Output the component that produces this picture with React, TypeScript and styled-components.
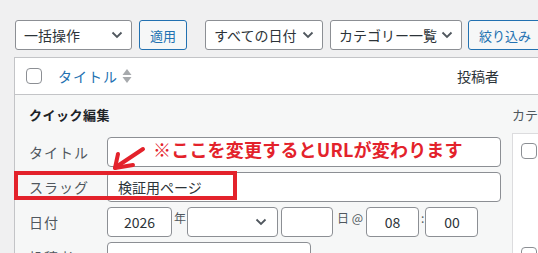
import styled, { createGlobalStyle } from "styled-components";

const GlobalStyle = createGlobalStyle`
  html, body {
    margin: 0;
    padding: 0;
    background: #f0f0f1;
    overflow: hidden;
  }
  body {
    font-family: "Noto Sans CJK JP", "Noto Sans", sans-serif;
    font-size: 14px;
    color: #2c3338;
  }
`;

const Page = styled.div`
  position: relative;
  width: 538px;
  height: 253px;
  overflow: hidden;
`;

const Toolbar = styled.div`
  display: flex;
  align-items: center;
  padding: 20px 0 0 15px;
  white-space: nowrap;
`;

const Select = styled.div<{ $w: number; $gap?: number }>`
  box-sizing: border-box;
  flex: none;
  width: ${(p) => p.$w}px;
  height: 30px;
  margin-right: ${(p) => p.$gap ?? 7}px;
  padding: 0 8px;
  display: flex;
  align-items: center;
  justify-content: space-between;
  background: #fff;
  border: 1px solid #8c8f94;
  border-radius: 3px;
  color: #2c3338;
  font-size: 14px;
`;

const Button = styled.div<{ $gap?: number }>`
  box-sizing: border-box;
  flex: none;
  height: 30px;
  padding: 0 10px;
  margin-right: ${(p) => p.$gap ?? 7}px;
  display: flex;
  align-items: center;
  background: #f6f7f7;
  border: 1px solid #2271b1;
  border-radius: 3px;
  color: #2271b1;
  font-size: 13px;
`;

const Chevron = () => (
  <svg width="12" height="8" viewBox="0 0 12 8">
    <path d="M1.5 1.5 L6 6 L10.5 1.5" fill="none" stroke="#50575e" strokeWidth="1.8" />
  </svg>
);

const Table = styled.div`
  margin: 7px 0 0 14px;
  width: 600px;
  border: 1px solid #c3c4c7;
  background: #fff;
`;

const HeadRow = styled.div`
  display: grid;
  grid-template-columns: 43px 399px 1fr;
  align-items: center;
  height: 36px;
  border-bottom: 1px solid #c3c4c7;
`;

const Check = styled.span`
  box-sizing: border-box;
  display: block;
  width: 16px;
  height: 16px;
  border: 1px solid #8c8f94;
  border-radius: 4px;
  background: #fff;
`;

const CheckCell = styled.div`
  padding-left: 11px;
`;

const SortLink = styled.div`
  display: flex;
  align-items: center;
  gap: 4px;
  color: #2271b1;
  font-size: 14px;
  letter-spacing: 1px;
`;

const AuthorHead = styled.div`
  color: #2c3338;
  font-size: 14px;
`;

const Edit = styled.div`
  display: flex;
  background: #f6f7f7;
  height: 200px;
`;

const LeftCol = styled.div`
  flex: none;
  width: 472px;
  padding: 10px 0 0 14px;
`;

const EditTitle = styled.div`
  font-weight: bold;
  font-size: 13px;
  line-height: 20px;
  color: #1d2327;
  letter-spacing: 0.5px;
  margin-bottom: 12px;
`;

const Row = styled.div`
  display: flex;
  align-items: center;
  height: 30px;
  margin-bottom: 5px;
`;

const Label = styled.div`
  flex: none;
  width: 78px;
  color: #50575e;
  font-size: 14px;
  letter-spacing: 1px;
`;

const Input = styled.div<{ $w: number; $center?: boolean; $ml?: number }>`
  box-sizing: border-box;
  flex: none;
  width: ${(p) => p.$w}px;
  height: 30px;
  margin-left: ${(p) => p.$ml ?? 0}px;
  padding: 0 10px;
  display: flex;
  align-items: center;
  justify-content: ${(p) => (p.$center ? "center" : "space-between")};
  background: #fff;
  border: 1px solid #8c8f94;
  border-radius: 4px;
  color: #2c3338;
  font-size: 14px;
`;

const Unit = styled.span<{ $l: number; $r: number }>`
  flex: none;
  margin: 0 ${(p) => p.$r}px 0 ${(p) => p.$l}px;
  color: #50575e;
  font-size: 12px;
  align-self: flex-start;
  line-height: 22px;
`;

const RightCol = styled.div`
  flex: 1;
  padding: 10px 0 0 11px;
`;

const CatLabel = styled.div`
  font-size: 13px;
  line-height: 20px;
  color: #50575e;
  white-space: nowrap;
  margin-bottom: 8px;
`;

const CatBox = styled.div`
  height: 130px;
  border: 1px solid #dcdcde;
  border-right: none;
  background: #fff;
  padding: 9px 0 0 8px;
  display: flex;
  flex-direction: column;
  gap: 88px;
`;

const Note = styled.div`
  position: absolute;
  left: 153px;
  top: 137px;
  color: #e3222b;
  font-weight: bold;
  font-size: 18px;
  line-height: 24px;
  white-space: nowrap;
  letter-spacing: 0.2px;
`;

const Highlight = styled.div`
  position: absolute;
  left: 14px;
  top: 171px;
  width: 223px;
  height: 29px;
  box-sizing: border-box;
  border: 4px solid #e3222b;
`;

const Arrow = styled.svg`
  position: absolute;
  left: 0;
  top: 0;
`;

export default function App() {
  return (
    <Page>
      <GlobalStyle />
      <Toolbar>
        <Select $w={117}>
          一括操作 <Chevron />
        </Select>
        <Button $gap={18}>適用</Button>
        <Select $w={118}>
          すべての日付 <Chevron />
        </Select>
        <Select $w={132} $gap={6}>
          カテゴリー一覧 <Chevron />
        </Select>
        <Button>絞り込み</Button>
      </Toolbar>
      <Table>
        <HeadRow>
          <CheckCell>
            <Check />
          </CheckCell>
          <SortLink>
            タイトル
            <svg width="10" height="16" viewBox="0 0 10 16">
              <path d="M5 1 L9.5 7 L0.5 7 Z" fill="#a7aaad" />
              <path d="M5 15 L9.5 9 L0.5 9 Z" fill="#a7aaad" />
            </svg>
          </SortLink>
          <AuthorHead>投稿者</AuthorHead>
        </HeadRow>
        <Edit>
          <LeftCol>
            <EditTitle>クイック編集</EditTitle>
            <Row>
              <Label>タイトル</Label>
              <Input $w={394} />
            </Row>
            <Row>
              <Label>スラッグ</Label>
              <Input $w={394}>検証用ページ</Input>
            </Row>
            <Row>
              <Label>日付</Label>
              <Input $w={65} $center>
                2026
              </Input>
              <Unit $l={2} $r={1}>年</Unit>
              <Input $w={91}>
                <span />
                <Chevron />
              </Input>
              <Input $w={52} $ml={3} />
              <Unit $l={4} $r={3}>日 @</Unit>
              <Input $w={53} $center>
                08
              </Input>
              <Unit $l={2} $r={1}>:</Unit>
              <Input $w={53} $center>
                00
              </Input>
            </Row>
            <Row>
              <Label>投稿者</Label>
              <Input $w={204} />
            </Row>
          </LeftCol>
          <RightCol>
            <CatLabel>カテゴリー</CatLabel>
            <CatBox>
              <Check />
              <Check />
            </CatBox>
          </RightCol>
        </Edit>
      </Table>
      <Highlight />
      <Note>※ここを変更するとURLが変わります</Note>
      <Arrow width="538" height="253" viewBox="0 0 538 253">
        <g fill="none" stroke="#e3222b" strokeWidth="4" strokeLinecap="round">
          <path d="M143 149 L116 167" />
          <path d="M115 168 L118 154" />
          <path d="M115 168 L133 165" />
        </g>
      </Arrow>
    </Page>
  );
}
